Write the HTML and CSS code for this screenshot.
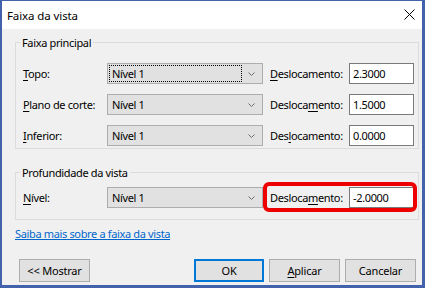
FILE: index.html
```html
<!DOCTYPE html>
<html lang="pt">
<head>
<meta charset="utf-8">
<title>Faixa da vista</title>
<link rel="stylesheet" href="styles.css">
</head>
<body>
<div class="window">
  <div class="titlebar">
    <span class="title">Faixa da vista</span>
    <svg class="close" width="11" height="11" viewBox="0 0 11 11"><path d="M0.5 0.5 L10.5 10.5 M10.5 0.5 L0.5 10.5" stroke="#000" stroke-width="1" fill="none"/></svg>
  </div>
  <div class="content">
    <fieldset class="group group-main">
      <legend>Faixa principal</legend>
      <div class="grid grid-main">
        <span class="lbl"><u>T</u>opo:</span>
        <div class="combo"><span class="combo-text focus">Nível 1</span><span class="arrow"><svg width="7" height="4" viewBox="0 0 7 4"><polyline points="0.5,0.5 3.5,3.5 6.5,0.5" fill="none" stroke="#6d6d6d" stroke-width="1"/></svg></span></div>
        <span class="lbl lbl-off"><u>D</u>eslocamento:</span>
        <div class="input">2.3000</div>

        <span class="lbl"><u>P</u>lano de corte:</span>
        <div class="combo"><span class="combo-text">Nível 1</span><span class="arrow"><svg width="7" height="4" viewBox="0 0 7 4"><polyline points="0.5,0.5 3.5,3.5 6.5,0.5" fill="none" stroke="#6d6d6d" stroke-width="1"/></svg></span></div>
        <span class="lbl lbl-off">Desloca<u>m</u>ento:</span>
        <div class="input">1.5000</div>

        <span class="lbl"><u>I</u>nferior:</span>
        <div class="combo"><span class="combo-text">Nível 1</span><span class="arrow"><svg width="7" height="4" viewBox="0 0 7 4"><polyline points="0.5,0.5 3.5,3.5 6.5,0.5" fill="none" stroke="#6d6d6d" stroke-width="1"/></svg></span></div>
        <span class="lbl lbl-off">Des<u>l</u>ocamento:</span>
        <div class="input">0.0000</div>
      </div>
    </fieldset>

    <fieldset class="group group-depth">
      <legend>Profundidade da vista</legend>
      <div class="grid grid-depth">
        <span class="lbl"><u>N</u>ível:</span>
        <div class="combo"><span class="combo-text">Nível 1</span><span class="arrow"><svg width="7" height="4" viewBox="0 0 7 4"><polyline points="0.5,0.5 3.5,3.5 6.5,0.5" fill="none" stroke="#6d6d6d" stroke-width="1"/></svg></span></div>
        <div class="highlight">
          <span class="lbl lbl-off">Desloca<u>m</u>ento:</span>
          <div class="input input-hl">-2.0000</div>
        </div>
      </div>
    </fieldset>

    <a class="link" href="#">Saiba mais sobre a faixa da vista</a>

    <div class="buttons">
      <button class="btn">&lt;&lt; Mostrar</button>
      <span class="spacer"></span>
      <button class="btn btn-ok">OK</button>
      <button class="btn"><u>A</u>plicar</button>
      <button class="btn">Cancelar</button>
    </div>
  </div>
</div>
</body>
</html>
```

FILE: styles.css
```css
* { box-sizing: border-box; }

html, body {
  margin: 0;
  padding: 0;
  background: #f0f0f0;
}

body {
  font-family: "Noto Sans", "Open Sans", sans-serif;
  font-size: 11px;
  color: #000;
}

u { text-decoration: underline; text-underline-offset: 2px; }

.window {
  width: 425px;
  height: 288px;
  border-style: solid;
  border-color: #4262ab;
  border-width: 1px 3px 3px 2px;
  display: flex;
  flex-direction: column;
  background: #f0f0f0;
}

.titlebar {
  height: 28px;
  background: #fff;
  display: flex;
  align-items: center;
  justify-content: space-between;
  padding: 0 7px 0 5px;
  flex: none;
}

.title {
  font-size: 11.5px;
  line-height: 15px;
  letter-spacing: -0.1px;
}

.close { display: block; margin-top: -1px; }

.content {
  flex: 1;
  display: flex;
  flex-direction: column;
  padding: 6px 3px 3px 13px;
  letter-spacing: -0.35px;
}

.group {
  margin: 0;
  padding: 0;
  min-width: 0;
  border: 1px solid #dcdcdc;
}

.group legend {
  margin-left: 4px;
  padding: 0 2px;
  line-height: 15px;
}

.group-depth { margin-top: 16px; }

.grid {
  display: grid;
  grid-template-columns: 84px 156px 86px 65px;
  grid-auto-rows: 21px;
  row-gap: 10px;
  padding-left: 7px;
  align-items: center;
}

.grid-main { padding-top: 13px; padding-bottom: 2px; }
.grid-depth { padding-top: 7px; padding-bottom: 11px; }

.lbl {
  white-space: nowrap;
  line-height: 15px;
}

.lbl-off { padding-left: 7px; }

.combo {
  height: 21px;
  background: #e1e1e1;
  border: 1px solid #adadad;
  display: flex;
  align-items: stretch;
}

.combo-text {
  flex: 1;
  margin: 1px;
  padding-left: 2px;
  display: flex;
  align-items: center;
  border: 1px solid transparent;
}

.combo-text.focus { border: 1px dotted #000; }

.arrow {
  width: 19px;
  display: flex;
  align-items: center;
  justify-content: center;
  padding-right: 2px;
}

.arrow svg { display: block; }

.input {
  height: 21px;
  background: #fff;
  border: 1px solid #7a7a7a;
  padding-left: 3px;
  display: flex;
  align-items: center;
}

.highlight {
  grid-column: 3 / 5;
  display: grid;
  grid-template-columns: 86px 65px;
  align-items: center;
  position: relative;
}

.highlight::before {
  content: "";
  position: absolute;
  top: -6px;
  left: 0;
  right: -3px;
  bottom: -4px;
  border: 4px solid #ee0000;
  border-radius: 6px;
  pointer-events: none;
}

.input-hl { margin-top: -1px; }

.link {
  margin-top: 6px;
  color: #0066cc;
  text-decoration: underline;
  line-height: 15px;
  align-self: flex-start;
}

.buttons {
  margin-top: auto;
  display: flex;
  gap: 5px;
  padding-left: 4px;
  padding-right: 3px;
}

.spacer { flex: 1; }

.btn {
  font: inherit;
  letter-spacing: -0.2px;
  color: #000;
  width: 71px;
  height: 23px;
  padding: 0;
  margin: 0;
  background: #e1e1e1;
  border: 1px solid #adadad;
  border-radius: 0;
}

.btn-ok {
  width: 70px;
  border: 2px solid #0078d7;
}
```
